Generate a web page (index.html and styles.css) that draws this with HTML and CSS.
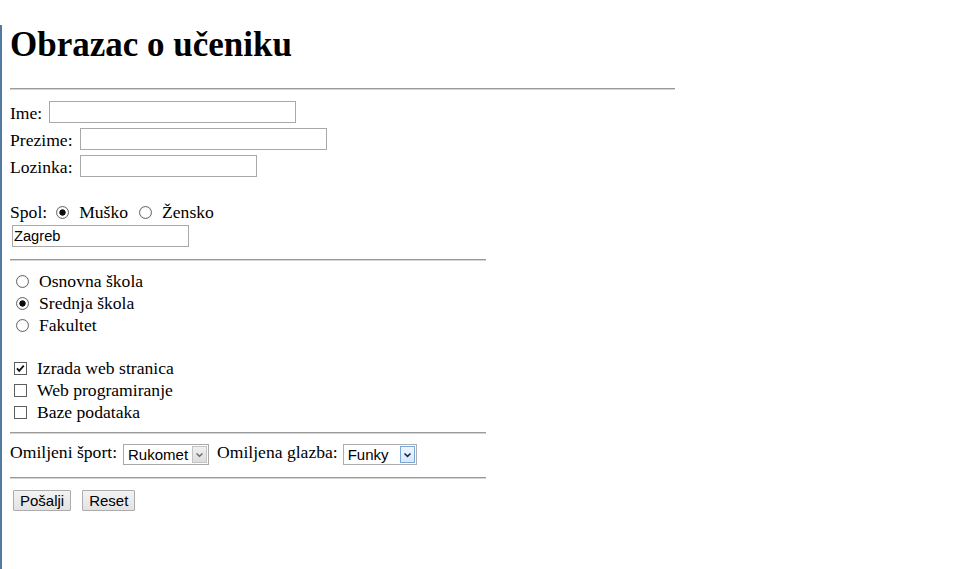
FILE: index.html
```html
<!DOCTYPE html>
<html lang="hr">
<head>
<meta charset="utf-8">
<title>Obrazac o učeniku</title>
<link rel="stylesheet" href="styles.css">
</head>
<body>
<div class="page">
  <h1 class="title">Obrazac o učeniku</h1>
  <hr class="rule rule-wide">
  <form class="form">
    <div class="field"><label class="field-label">Ime:</label><input class="text" type="text"></div>
    <div class="field"><label class="field-label">Prezime:</label><input class="text" type="text"></div>
    <div class="field field-last"><label class="field-label">Lozinka:</label><input class="text text-short" type="password"></div>

    <div class="choice-row">
      <span class="spol-label">Spol:</span>
      <span class="radio radio-inline checked"></span><span class="spol-opt">Muško</span>
      <span class="radio radio-inline"></span><span>Žensko</span>
    </div>
    <input class="text text-short city" type="text" value="Zagreb">

    <hr class="rule rule-half rule-after-city">

    <div class="options">
      <div class="option"><span class="radio radio-list"></span><span>Osnovna škola</span></div>
      <div class="option"><span class="radio radio-list checked"></span><span>Srednja škola</span></div>
      <div class="option"><span class="radio radio-list"></span><span>Fakultet</span></div>
    </div>

    <div class="checks">
      <div class="option"><span class="check"><svg class="tick" width="11" height="11" viewBox="0 0 11 11"><polyline points="2,5.3 4.2,7.8 8.8,2.6" fill="none" stroke="#111" stroke-width="1.8"/></svg></span><span>Izrada web stranica</span></div>
      <div class="option"><span class="check"></span><span>Web programiranje</span></div>
      <div class="option"><span class="check"></span><span>Baze podataka</span></div>
    </div>

    <hr class="rule rule-half rule-before-select">

    <div class="select-row">
      <span class="select-label">Omiljeni šport:</span>
      <span class="select-box select-sport">
        <select class="select"><option>Rukomet</option><option>Nogomet</option><option>Košarka</option></select>
        <span class="arrow"><svg width="9" height="6" viewBox="0 0 9 6"><polyline points="1.5,1.5 4.5,4.3 7.5,1.5" fill="none" stroke="#6a6a6a" stroke-width="1.4"/></svg></span>
      </span>
      <span class="select-label label-music">Omiljena glazba:</span>
      <span class="select-box select-music">
        <select class="select"><option>Funky</option><option>Rock</option><option>Jazz</option></select>
        <span class="arrow arrow-active"><svg width="9" height="6" viewBox="0 0 9 6"><polyline points="1.5,1.5 4.5,4.3 7.5,1.5" fill="none" stroke="#1c2c48" stroke-width="1.6"/></svg></span>
      </span>
    </div>

    <hr class="rule rule-half rule-before-buttons">

    <div class="actions">
      <button class="btn" type="submit">Pošalji</button>
      <button class="btn" type="reset">Reset</button>
    </div>
  </form>
</div>
</body>
</html>
```

FILE: styles.css
```css
html, body {
  margin: 0;
  padding: 0;
  background: #fff;
}

body {
  font-family: "Liberation Serif", "Times New Roman", serif;
  font-size: 17.6px;
  color: #000;
}

.page {
  min-height: 100vh;
  box-sizing: border-box;
  border-left: 2px solid #52799f;
  padding-left: 8px;
}

.title {
  margin: 25px 0 0;
  font-size: 35px;
  line-height: 40px;
  font-weight: bold;
}

.rule {
  height: 0;
  margin: 0;
  border: 0;
  border-top: 1px solid #9a9a9a;
  border-bottom: 1px solid #d4d4d4;
}

.rule-wide {
  width: 665px;
  margin-top: 23px;
}

.rule-half {
  width: 476px;
}

.form {
  margin: 11px 0 0;
}

.field {
  display: flex;
  align-items: flex-start;
  gap: 7px;
  height: 22px;
  margin-bottom: 5px;
}

.field-last {
  margin-bottom: 24px;
}

.field-label {
  line-height: 20px;
  margin-top: 2px;
}

.text {
  box-sizing: border-box;
  width: 247px;
  height: 22px;
  margin: 0;
  padding: 0 1px;
  border: 1px solid #a9a9a9;
  background: #fff;
  font-family: "Liberation Sans", Arial, sans-serif;
  font-size: 14.67px;
  color: #000;
  outline: none;
}

.text-short {
  width: 177px;
}

.choice-row {
  display: flex;
  align-items: center;
  height: 22px;
  line-height: 22px;
}

.spol-label {
  margin-right: 9px;
}

.spol-opt {
  margin-right: 11px;
}

.radio {
  display: inline-block;
  box-sizing: border-box;
  width: 13px;
  height: 13px;
  border-radius: 50%;
  border: 1px solid #666;
  background: radial-gradient(circle, #ffffff 0 4px, #e6e6e6 6px);
  flex: none;
}

.radio.checked {
  background: radial-gradient(circle, #0d0d0d 0 2.8px, #fff 3.5px, #fff 4.2px, #e6e6e6 6px);
}

.radio-inline {
  margin-right: 10px;
}

.radio-list {
  margin: 0 10px 0 6px;
}

.city {
  display: block;
  margin: 2px 0 0 2px;
}

.rule-after-city {
  margin-top: 12px;
}

.options {
  margin-top: 9px;
}

.option {
  display: flex;
  align-items: center;
  height: 22px;
  line-height: 22px;
}

.checks {
  margin-top: 21px;
}

.check {
  display: inline-flex;
  box-sizing: border-box;
  width: 13px;
  height: 13px;
  margin: 0 10px 0 4px;
  border: 1px solid #5e5e5e;
  background: #fff;
  flex: none;
}

.tick {
  display: block;
}

.rule-before-select {
  margin-top: 9px;
}

.select-row {
  display: flex;
  align-items: flex-start;
  height: 21px;
  margin-top: 10px;
}

.select-label {
  line-height: 16px;
  margin-right: 6px;
}

.label-music {
  margin-left: 8px;
  margin-right: 5px;
}

.select-box {
  display: inline-flex;
  box-sizing: border-box;
  height: 21px;
  border: 1px solid #a9a9a9;
  background: #fff;
}

.select-sport {
  width: 86px;
}

.select-music {
  width: 74px;
  border-color: #abadb3;
}

.select {
  appearance: none;
  -webkit-appearance: none;
  flex: 1;
  min-width: 0;
  height: 100%;
  margin: 0;
  padding: 0 0 0 4px;
  border: 0;
  background: transparent;
  font-family: "Liberation Sans", Arial, sans-serif;
  font-size: 15px;
  color: #000;
  outline: none;
}

.arrow {
  display: flex;
  align-items: center;
  justify-content: center;
  box-sizing: border-box;
  width: 15px;
  margin: 1px;
  border: 1px solid #c3c3c3;
  background: linear-gradient(#f0f0f0, #dcdcdc);
}

.arrow-active {
  border-color: #7aa7d6;
  background: linear-gradient(#eef6fd, #d6e8f8);
}

.rule-before-buttons {
  margin-top: 12px;
}

.actions {
  display: flex;
  gap: 11px;
  margin-top: 11px;
  padding-left: 3px;
}

.btn {
  box-sizing: border-box;
  height: 21px;
  margin: 0;
  padding: 0 6px;
  border: 1px solid #acacac;
  border-radius: 1px;
  background: linear-gradient(#f3f3f3, #e2e2e2);
  font-family: "Liberation Sans", Arial, sans-serif;
  font-size: 15px;
  color: #000;
  line-height: 19px;
}
```
